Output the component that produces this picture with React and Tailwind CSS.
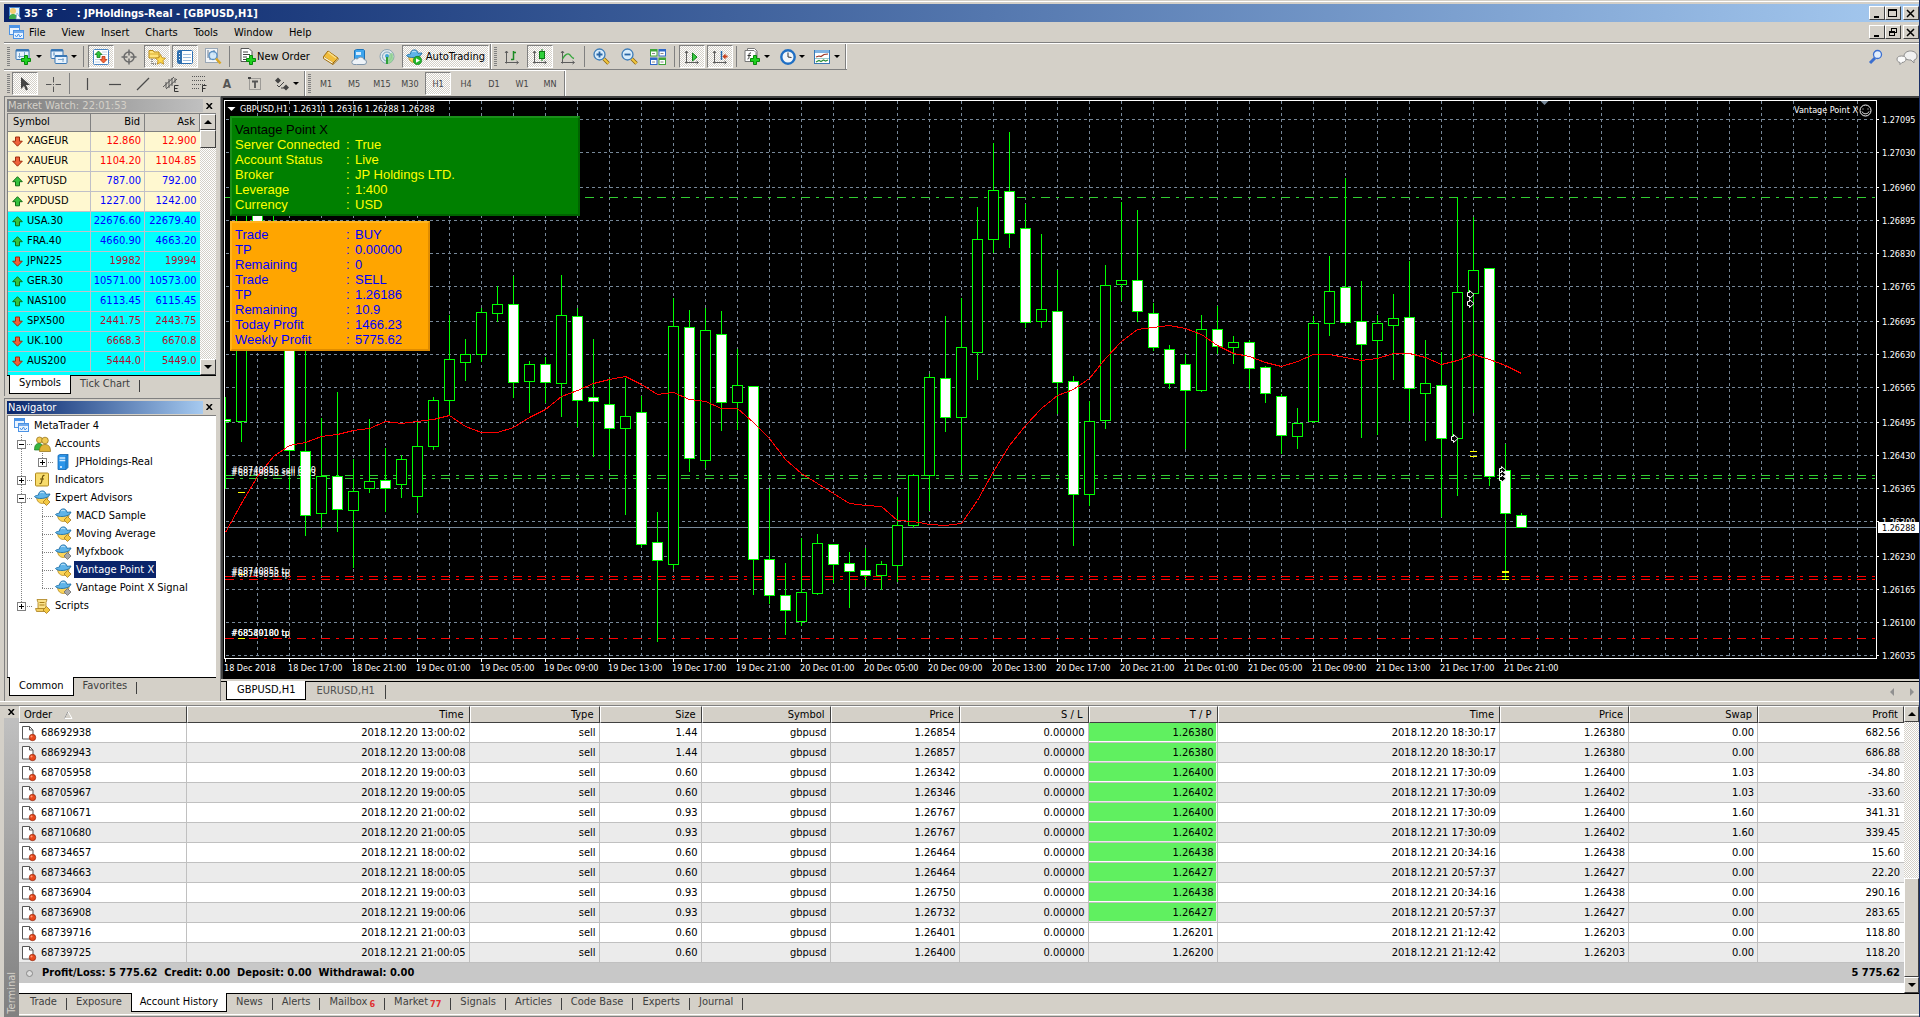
import React from "react";

/* ---------------------------------------------------------------- data */

const quotes = [
  ["XAGEUR", "12.860", "12.900", "down", "metal"],
  ["XAUEUR", "1104.20", "1104.85", "down", "metal"],
  ["XPTUSD", "787.00", "792.00", "up", "metal"],
  ["XPDUSD", "1227.00", "1242.00", "up", "metal"],
  ["USA.30", "22676.60", "22679.40", "up", "index"],
  ["FRA.40", "4660.90", "4663.20", "up", "index"],
  ["JPN225", "19982", "19994", "down", "index"],
  ["GER.30", "10571.00", "10573.00", "up", "index"],
  ["NAS100", "6113.45", "6115.45", "up", "index"],
  ["SPX500", "2441.75", "2443.75", "down", "index"],
  ["UK.100", "6668.3", "6670.8", "down", "index"],
  ["AUS200", "5444.0", "5449.0", "down", "index"],
];

const orders = [
  ["68692938", "2018.12.20 13:00:02", "1.44", "1.26854", "1.26380", "2018.12.20 18:30:17", "1.26380", "0.00", "682.56", true],
  ["68692943", "2018.12.20 13:00:08", "1.44", "1.26857", "1.26380", "2018.12.20 18:30:17", "1.26380", "0.00", "686.88", true],
  ["68705958", "2018.12.20 19:00:03", "0.60", "1.26342", "1.26400", "2018.12.21 17:30:09", "1.26400", "1.03", "-34.80", true],
  ["68705967", "2018.12.20 19:00:05", "0.60", "1.26346", "1.26402", "2018.12.21 17:30:09", "1.26402", "1.03", "-33.60", true],
  ["68710671", "2018.12.20 21:00:02", "0.93", "1.26767", "1.26400", "2018.12.21 17:30:09", "1.26400", "1.60", "341.31", true],
  ["68710680", "2018.12.20 21:00:05", "0.93", "1.26767", "1.26402", "2018.12.21 17:30:09", "1.26402", "1.60", "339.45", true],
  ["68734657", "2018.12.21 18:00:02", "0.60", "1.26464", "1.26438", "2018.12.21 20:34:16", "1.26438", "0.00", "15.60", true],
  ["68734663", "2018.12.21 18:00:05", "0.60", "1.26464", "1.26427", "2018.12.21 20:57:37", "1.26427", "0.00", "22.20", true],
  ["68736904", "2018.12.21 19:00:03", "0.93", "1.26750", "1.26438", "2018.12.21 20:34:16", "1.26438", "0.00", "290.16", true],
  ["68736908", "2018.12.21 19:00:06", "0.93", "1.26732", "1.26427", "2018.12.21 20:57:37", "1.26427", "0.00", "283.65", true],
  ["68739716", "2018.12.21 21:00:03", "0.60", "1.26401", "1.26201", "2018.12.21 21:12:42", "1.26203", "0.00", "118.80", false],
  ["68739725", "2018.12.21 21:00:05", "0.60", "1.26400", "1.26200", "2018.12.21 21:12:42", "1.26203", "0.00", "118.20", false],
];

/* [high, body top, body bottom, low, bearish] in plot units, one per hour */
const candles = [
  [397, 419, 421, 488, 1], [190, 200, 421, 441, 0], [180, 214, 300, 320, 1], [200, 240, 300, 330, 0],
  [290, 300, 450, 489, 1], [300, 451, 515, 535, 1], [418, 476, 513, 527, 0], [392, 476, 509, 531, 1],
  [459, 491, 510, 567, 0], [419, 481, 488, 492, 0], [448, 480, 488, 511, 1], [455, 459, 484, 497, 0],
  [422, 446, 496, 512, 0], [397, 400, 446, 449, 0], [315, 359, 400, 415, 0], [339, 354, 362, 380, 0],
  [308, 312, 354, 361, 0], [286, 304, 313, 321, 0], [276, 304, 382, 397, 1], [361, 364, 381, 412, 0],
  [357, 364, 382, 402, 1], [275, 315, 383, 416, 0], [308, 316, 400, 426, 1], [339, 397, 401, 456, 1],
  [378, 404, 428, 468, 1], [378, 416, 428, 514, 0], [396, 412, 544, 546, 1], [512, 542, 560, 641, 1],
  [298, 326, 564, 568, 0], [310, 327, 458, 471, 1], [308, 330, 460, 467, 0], [311, 334, 402, 430, 1],
  [349, 385, 402, 429, 0], [386, 386, 559, 594, 1], [488, 559, 595, 603, 1], [563, 595, 610, 634, 1],
  [538, 592, 621, 625, 0], [534, 543, 593, 594, 0], [544, 544, 564, 582, 1], [552, 563, 571, 607, 1],
  [548, 570, 575, 586, 1], [561, 564, 575, 589, 0], [497, 525, 565, 581, 0], [474, 475, 525, 527, 0],
  [374, 377, 475, 510, 0], [316, 378, 417, 431, 1], [298, 347, 417, 472, 0], [207, 239, 352, 379, 0],
  [143, 190, 239, 252, 0], [132, 191, 233, 247, 1], [204, 228, 322, 327, 1], [234, 309, 321, 327, 0],
  [270, 311, 382, 413, 1], [376, 381, 494, 545, 1], [401, 421, 494, 505, 0], [265, 285, 420, 428, 0],
  [202, 280, 284, 300, 0], [210, 280, 311, 321, 1], [303, 313, 347, 350, 1], [345, 349, 383, 388, 1],
  [354, 364, 390, 448, 1], [315, 329, 390, 391, 0], [306, 329, 346, 353, 1], [336, 342, 347, 363, 0],
  [340, 342, 368, 388, 1], [366, 367, 393, 402, 1], [394, 396, 435, 453, 1], [408, 423, 436, 448, 0],
  [316, 323, 421, 422, 0], [256, 291, 323, 335, 0], [178, 287, 322, 324, 1], [281, 321, 344, 437, 1],
  [315, 323, 340, 434, 0], [294, 318, 325, 379, 0], [261, 317, 388, 420, 1], [340, 383, 393, 440, 0],
  [352, 385, 438, 516, 1], [197, 292, 438, 495, 0], [217, 270, 293, 412, 0], [268, 268, 476, 485, 1],
  [444, 470, 513, 578, 1], [513, 515, 527, 527, 1],
];

/* moving average, one value per candle */
const average = [
  532, 503, 476, 456, 445, 442, 436, 434, 430, 428, 421, 423, 421, 419, 415, 426, 432, 432, 427, 417, 409, 396, 390, 383,
  379, 376, 384, 394, 392, 399, 401, 408, 408, 422, 438, 459, 473, 483, 493, 503, 505, 506, 520, 521, 524, 525, 523, 500,
  471, 445, 425, 408, 395, 389, 378, 358, 341, 329, 327, 325, 328, 334, 345, 353, 356, 362, 366, 361, 354, 354, 357, 360,
  358, 353, 353, 357, 364, 360, 354, 359, 365, 373,
];

const prices = [
  [119, "1.27095"], [152, "1.27030"], [187, "1.26960"], [220, "1.26895"], [253, "1.26830"], [286, "1.26765"],
  [321, "1.26695"], [354, "1.26630"], [387, "1.26565"], [422, "1.26495"], [455, "1.26430"], [488, "1.26365"],
  [521, "1.26300"], [556, "1.26230"], [589, "1.26165"], [622, "1.26100"], [655, "1.26035"],
];

const levels = [
  [197, "#32cd32"], [475, "#32cd32"], [478, "#32cd32"],
  [576, "#ff0000"], [579, "#ff0000"], [638, "#ff0000"],
];

const times = [
  "18 Dec 2018", "18 Dec 17:00", "18 Dec 21:00", "19 Dec 01:00", "19 Dec 05:00", "19 Dec 09:00", "19 Dec 13:00",
  "19 Dec 17:00", "19 Dec 21:00", "20 Dec 01:00", "20 Dec 05:00", "20 Dec 09:00", "20 Dec 13:00", "20 Dec 17:00",
  "20 Dec 21:00", "21 Dec 01:00", "21 Dec 05:00", "21 Dec 09:00", "21 Dec 13:00", "21 Dec 17:00", "21 Dec 21:00",
];

/* --------------------------------------------------------------- icons */

function Icon({ children, w = 16, h = 16 }) {
  return (
    <svg width={w} height={h} viewBox={`0 0 ${w} ${h}`} className="shrink-0" aria-hidden="true">
      {children}
    </svg>
  );
}

const plus = (
  <path d="M9.5 7.5h3v3h3v3h-3v3h-3v-3h-3v-3h3z" fill="#1fd01f" stroke="#078a0a" />
);

const NewChartIcon = () => (
  <Icon w={18} h={17}>
    <rect x="1" y="1.5" width="13" height="10" rx="1" fill="#e8f3fd" stroke="#3877b5" />
    <path d="M1 2.5h13" stroke="#3877b5" strokeWidth="2" />
    <path d="M4.500 5v5M3 8.500h8M9.500 4v5" stroke="#7aa5cc" />
    {plus}
  </Icon>
);
const ProfilesIcon = () => (
  <Icon w={18} h={17}>
    <rect x="1" y="1.5" width="12" height="9" rx="1" fill="#e8f3fd" stroke="#3877b5" />
    <path d="M1 2.5h12" stroke="#3877b5" strokeWidth="2" />
    <rect x="5" y="7.500" width="12" height="8" rx="1" fill="#e8f3fd" stroke="#3877b5" />
    <path d="M5 8h12" stroke="#3877b5" strokeWidth="2" />
    <path d="M3 6h2M4 4v4M8 11.5h6M13 10v4" stroke="#7aa5cc" />
  </Icon>
);
const MarketIcon = () => (
  <Icon>
    <rect x=".5" y=".5" width="15" height="15" rx="1" fill="#fff" stroke="#4a86c5" />
    <path d="M9 3h5M9 5.500h5M2 10.500h5M2 13h5" stroke="#c3d4e6" />
    <path d="M5.500 2l3.500 3.500H7V8.500H4V5.500H2z" fill="#2ec43a" stroke="#117a1b" strokeWidth=".8" />
    <path d="M10.500 14L7 10.500h2V7.500h3v3h2z" fill="#f4673a" stroke="#b93312" strokeWidth=".8" />
  </Icon>
);
const TargetIcon = () => (
  <Icon>
    <circle cx="8" cy="8" r="5" fill="none" stroke="#6b6b6b" strokeWidth="1.500" />
    <path d="M8 .5v6M8 9.500v6M.5 8h6M9.500 8h6" stroke="#6b6b6b" strokeWidth="1.500" />
  </Icon>
);
const FolderStarIcon = () => (
  <Icon w={18} h={16}>
    <path d="M1 1.500h4l1 1.500h5v6H1z" fill="#ffe37a" stroke="#b98a14" />
    <path d="M1 5h11" stroke="#d8aa2c" />
    <path d="M4 10v5h4" fill="none" stroke="#333" strokeDasharray="1 1" />
    <path d="M12.500 5.500l1.600 3.300 3.400.4-2.500 2.500.6 3.500-3.100-1.700-3.100 1.700.6-3.500L7.500 9.200l3.400-.4z" fill="#ffd94a" stroke="#b9861a" strokeWidth=".8" />
  </Icon>
);
const NotebookIcon = () => (
  <Icon>
    <rect x=".5" y="1.500" width="15" height="13" rx="1" fill="#fff" stroke="#2c6fb2" />
    <rect x="1" y="2" width="4" height="12" fill="#2f6fae" />
    <path d="M2.500 4v1M2.500 7v1M2.500 10v1" stroke="#fff" />
    <path d="M6 5.500h8M6 8.500h8M6 11.500h8" stroke="#9fbddd" />
  </Icon>
);
const TesterIcon = () => (
  <Icon w={18} h={17}>
    <rect x="1.500" y=".5" width="12" height="14" fill="#f3f6f9" stroke="#9aa7b5" />
    <path d="M4 2v8M6 4v8M10 2v5" stroke="#6a7b8c" />
    <circle cx="9" cy="7.500" r="4" fill="#cfe8fa" fillOpacity=".85" stroke="#5a90c4" strokeWidth="1.300" />
    <path d="M12 10.500l4.500 5" stroke="#d8a524" strokeWidth="2.500" />
  </Icon>
);
const NewOrderIcon = () => (
  <Icon w={17} h={17}>
    <path d="M1 .5h8l3 3v10H1z" fill="#fff" stroke="#555" />
    <path d="M3 4h5M3 6.500h7M3 9h4M3 11.500h3" stroke="#444" />
    {plus}
  </Icon>
);
const BookIcon = () => (
  <Icon>
    <path d="M5 2l10 7-5 5L.5 7.500z" fill="#f1bd3c" stroke="#9d6a0b" />
    <path d="M.5 7.500v2l9.500 6v-2M10 15.500l5-5V9" fill="#fff6d3" stroke="#9d6a0b" />
    <path d="M5 3l8 6" stroke="#fbe08b" strokeWidth="1.500" />
  </Icon>
);
const CloudIcon = () => (
  <Icon>
    <path d="M3.500 1.500l2-1h7l1 1v9h-10z" fill="#3ea5ee" stroke="#1c73b8" />
    <path d="M5 3h5v3H5z" fill="#d4ecfd" />
    <path d="M5.500 15.500h7.500a2.500 2.500 0 0 0 0-5 3.500 3.500 0 0 0-6.500-.5A3 3 0 0 0 2.500 11a2.300 2.300 0 0 0 .5 4.500z" fill="#eef3f8" stroke="#8096ab" />
  </Icon>
);
const SignalIcon = () => (
  <Icon>
    <circle cx="8" cy="7.500" r="7" fill="#dfe8ee" stroke="#8da4b3" />
    <circle cx="8" cy="7.500" r="4.500" fill="none" stroke="#7ba2bd" />
    <path d="M8 7.500L9 15a7.500 7.500 0 0 0 5.500-5.500 7 7 0 0 0-1.500-6z" fill="#8ed38a" fillOpacity=".8" />
    <circle cx="8" cy="7" r="2" fill="#45a5d8" />
    <path d="M8 8v7" stroke="#2f9e38" strokeWidth="2" />
  </Icon>
);
const AdvisorIcon = ({ badge }) => (
  <Icon w={17} h={16}>
    <path d="M2.500 6.500c0 5 3 7 6 7s5.500-3 5.500-7z" fill="#fcd55a" stroke="#b4881b" strokeWidth=".8" />
    <path d="M.5 6.500c1 3 14.500 3 15.500-2.500-1.500 0-3 .3-4 .3C11.500 1.500 9.500.5 7.500 1S4.500 3 4.500 5c-1.500.5-3 .5-4 1.500z" fill="#5fb4e8" stroke="#1e6ea6" strokeWidth=".9" />
    <path d="M6 3c1-1 3-1 4 0" fill="none" stroke="#c4e6fb" />
    {badge === "play" && (
      <g>
        <circle cx="11.500" cy="11.500" r="4.200" fill="#22b52b" stroke="#0e7c16" strokeWidth=".6" />
        <path d="M10 9.300l4 2.200-4 2.200z" fill="#fff" />
      </g>
    )}
    {badge === "gold" && <path d="M12.500 8.500l3.500 3.500-3.500 3.500L9 12z" fill="#f3c842" stroke="#a5771a" strokeWidth=".8" />}
    {badge === "gray" && <path d="M12.500 8.500l3.500 3.500-3.500 3.500L9 12z" fill="#a8a8a8" stroke="#6b6b6b" strokeWidth=".8" />}
  </Icon>
);
const axes = <path d="M2.500 2v12.500M1 13.500h13M1 4l1.500-2L4 4M12.500 12l2 1.500-2 1.500" fill="none" stroke="#5c5c5c" />;
const BarsIcon = () => (
  <Icon>
    {axes}
    <path d="M9.500 2v9M9.500 3.500H12M7 10.500h2.500" stroke="#1a8a22" strokeWidth="1.500" fill="none" />
  </Icon>
);
const CandlesIcon = () => (
  <Icon>
    {axes}
    <path d="M10 0v12" stroke="#0d7714" />
    <rect x="7.500" y="2.500" width="5" height="7" fill="#2fd03a" stroke="#0d7714" />
  </Icon>
);
const LineChartIcon = () => (
  <Icon>
    {axes}
    <path d="M2.500 10C5 5 8 4 9.500 5.500S12 9 14 9.500" stroke="#35a53c" strokeWidth="1.300" fill="none" />
  </Icon>
);
const ZoomIcon = ({ out }) => (
  <Icon w={17} h={17}>
    <path d="M10.500 10.500l5 5" stroke="#8a6410" strokeWidth="3.500" />
    <path d="M10.500 10.500l5 5" stroke="#f2c73e" strokeWidth="2" />
    <circle cx="6.500" cy="6.500" r="5.500" fill="#d7ecfb" stroke="#3f7db8" strokeWidth="1.300" />
    <path d={out ? "M3.500 6.500h6" : "M3.500 6.500h6M6.500 3.500v6"} stroke="#2a66a5" strokeWidth="1.800" />
  </Icon>
);
const TileIcon = () => (
  <Icon>
    <rect x="0" y="0" width="7.500" height="7.500" fill="#3fa53a" />
    <rect x="8.500" y="0" width="7.500" height="7.500" fill="#2f68c8" />
    <rect x="0" y="8.500" width="7.500" height="7.500" fill="#2f68c8" />
    <rect x="8.500" y="8.500" width="7.500" height="7.500" fill="#3fa53a" />
    <path d="M1 2.500h5.500v4H1zM9.500 2.500H15v4H9.500zM1 11h5.500v4H1zM9.500 11H15v4H9.500z" fill="#fff" />
    <path d="M2 4.500h3M10.500 4.500h3M2 13h3M10.500 13h3" stroke="#888" />
  </Icon>
);
const ScrollIcon = () => (
  <Icon>
    {axes}
    <path d="M8.500 4l4.500 4-4.500 4z" fill="#37cd40" stroke="#12801a" />
  </Icon>
);
const ShiftIcon = () => (
  <Icon>
    {axes}
    <path d="M9.500 2v9" stroke="#2467a8" strokeWidth="1.500" />
    <path d="M10.500 7.500l3-3v2h2v2h-2v2z" fill="#c8401c" />
  </Icon>
);
const IndicatorsIcon = () => (
  <Icon w={17} h={17}>
    <path d="M3.500.5h7l2.500 2.500v9H3.500z" fill="#fff" stroke="#777" />
    <path d="M1 2.500h9l2 2v9H1z" fill="#fff" stroke="#777" />
    <path d="M7 5C5 4.500 5 6 5 8s0 3-1.500 3M3.500 7.500H7" stroke="#333" fill="none" />
    {plus}
  </Icon>
);
const ClockIcon = () => (
  <Icon>
    <circle cx="8" cy="8" r="6.700" fill="#f1f6fb" stroke="#1f6fc4" strokeWidth="2.400" />
    <path d="M8 3.500V8l3.500.5" fill="none" stroke="#333" />
  </Icon>
);
const TemplateIcon = () => (
  <Icon w={17} h={16}>
    <rect x=".5" y="1.500" width="15" height="13" fill="#fff" stroke="#3877b5" />
    <rect x="1" y="1" width="14" height="3" fill="#7eb2e2" />
    <path d="M2 8l3-1 2 .5L10 5.500l4-.5" fill="none" stroke="#9c3323" strokeWidth="1.200" />
    <path d="M1 9.500h14" stroke="#9cc" />
    <path d="M2 13l3-1.500 2 1 2.500-1.500 2 1 2.500-1" fill="none" stroke="#2d8f3a" strokeWidth="1.200" />
  </Icon>
);
const CursorIcon = () => (
  <Icon>
    <path d="M4 1l9 8H9l2 4.500-2 1L7 10l-3 3z" fill="#444" />
  </Icon>
);
const CrossIcon = () => (
  <Icon>
    <path d="M8.500 1v5.500M8.500 10.500V16M1 8.500h5.500M10.500 8.500H16M8 8.500h1" stroke="#555" />
  </Icon>
);
const LineIcon = ({ d }) => (
  <Icon>
    <path d={d} stroke="#4a4a4a" strokeWidth="1.200" fill="none" />
  </Icon>
);
const ChannelIcon = () => (
  <Icon w={18} h={17}>
    <path d="M1 12L12 2M4 14L15 4M4 7v6M7 4v9M10 3v8M13 3v5" stroke="#555" />
    <path d="M16.500 10.500h-4v6h4M12.500 13.500h3" stroke="#333" fill="none" />
  </Icon>
);
const FiboIcon = () => (
  <Icon w={17} h={17}>
    <path d="M1 1.500h14M1 5.500h14M1 9.500h14M1 13.500h8" stroke="#555" strokeDasharray="1 1" />
    <path d="M15.500 10.500h-4V17M11.500 13.500h3" stroke="#333" fill="none" />
  </Icon>
);
const LabelIcon = () => (
  <Icon>
    <rect x="2.500" y="2.500" width="11" height="11" fill="none" stroke="#666" strokeDasharray="1 1" />
    <rect x="1" y="1" width="3" height="2" fill="#444" />
    <path d="M5 5.500h6M8 5.500v6.500" stroke="#555" strokeWidth="1.800" />
  </Icon>
);
const ArrowsIcon = () => (
  <Icon>
    <path d="M4 1.500l3 3-3 3-3-3zM12 8.500l3 3-3 3-3-3z" fill="#444" />
    <path d="M3 9l2 2 5-5M7 12h3" stroke="#444" fill="none" />
  </Icon>
);
const SearchIcon = () => (
  <Icon>
    <path d="M2 14l5-5" stroke="#3b6fd0" strokeWidth="3" />
    <circle cx="9.500" cy="5.500" r="4" fill="#e3eefc" stroke="#3b6fd0" strokeWidth="1.300" />
  </Icon>
);
const ChatIcon = () => (
  <Icon w={22} h={16}>
    <path d="M8 7c0-3 3-5 6.500-5S21 4 21 7s-2 4-3 4v3l-3-3C11 11 8 10 8 7z" fill="#f0f0f0" stroke="#8d8d8d" />
    <path d="M1 10c0-2 2-3 4.500-3S10 8 10 10s-2 3.500-4 3.500L4 15.500v-2C2 13 1 12 1 10z" fill="#fafafa" stroke="#8d8d8d" />
  </Icon>
);
const AppIcon = () => (
  <Icon w={14} h={14}>
    <rect x="1.500" y="1.500" width="10" height="8" fill="#e9f3fd" stroke="#4a8ad0" />
    <circle cx="5" cy="5" r="3" fill="#f3ce73" />
    <path d="M1 13c0-4 2-5 4-5s4 1 4 5z" fill="#3fae4d" />
    <path d="M8 13l1-6 4 6z" fill="#fff" stroke="#7aa0c8" strokeWidth=".6" />
  </Icon>
);
const ChartsIcon = () => (
  <Icon w={15} h={15}>
    <rect x=".5" y=".5" width="10" height="9" fill="#eaf4ff" stroke="#4b93e6" />
    <path d="M1 2h9" stroke="#4b93e6" strokeWidth="2" />
    <rect x="4.500" y="5.500" width="10" height="8" fill="#eaf4ff" stroke="#4b93e6" />
    <path d="M5 7h9" stroke="#4b93e6" strokeWidth="1.500" />
    <path d="M6 10l1.500 2 2-3 1.500 3 2-2" fill="none" stroke="#4b93e6" />
  </Icon>
);
const PeopleIcon = () => (
  <Icon w={17} h={16}>
    <circle cx="5.500" cy="4" r="3" fill="#f0ca55" stroke="#8f6b12" strokeWidth=".7" />
    <path d="M0.500 14c0-4 1-6.500 4.500-6.500S9 10 9 14z" fill="#38b540" stroke="#1b7a22" strokeWidth=".7" />
    <circle cx="11" cy="4.500" r="3.300" fill="#f0ca55" stroke="#8f6b12" strokeWidth=".7" />
    <path d="M5.500 15.500c0-5 2-7 5.500-7s5.500 2 5.500 7z" fill="#dfb437" stroke="#8f6b12" strokeWidth=".7" />
  </Icon>
);
const ServerIcon = () => (
  <Icon>
    <path d="M3 1.500l2-1h8v13l-2 2H3z" fill="#2b95ea" stroke="#1264ae" strokeWidth=".8" />
    <path d="M4.500 4h6M4.500 6.500h6" stroke="#d2eaff" strokeWidth="1.300" />
    <path d="M11 15.500V2.500l2-2" fill="none" stroke="#0f5ca2" strokeWidth=".7" />
    <rect x="5" y="12" width="2" height="2" fill="#bfe2ff" />
  </Icon>
);
const FunctionIcon = () => (
  <Icon>
    <rect x="1.500" y="1" width="13" height="13" rx="1" fill="#f8dc6c" stroke="#b18a1d" />
    <path d="M10.500 3.500C8 3 8.500 6 8 8s-.5 4-2.500 3.500M6 7h4" stroke="#6d5208" fill="none" strokeWidth="1.200" />
  </Icon>
);
const ScriptIcon = () => (
  <Icon w={17} h={16}>
    <path d="M3 1.500h10l-1 3v6H4v-6z" fill="#fbe28a" stroke="#a97f1a" strokeWidth=".8" />
    <path d="M1.500 10.500h9v3h-8z" fill="#f4cf62" stroke="#a97f1a" strokeWidth=".8" />
    <path d="M5.500 4.500h5M5.500 7h5" stroke="#a97f1a" />
    <path d="M12.500 8.500L16 12l-3.500 3.500L9 12z" fill="#f3c842" stroke="#a5771a" strokeWidth=".8" />
  </Icon>
);
const OrderIcon = () => (
  <Icon w={15} h={17}>
    <path d="M.5 1.500h7l3.500 3.500v9H.5z" fill="#fff" stroke="#555" />
    <path d="M7.500 1.500V5H11" fill="none" stroke="#555" />
    <circle cx="10.500" cy="12.500" r="3.200" fill="#e8481c" stroke="#8f2409" strokeWidth=".7" />
    <circle cx="9.500" cy="11.500" r="1" fill="#ff9b77" />
  </Icon>
);
const TickIcon = ({ up }) => (
  <Icon w={11} h={11}>
    <path
      d={up ? "M5.500.7l4.800 5H7.500V9.800h-4V5.700H.7z" : "M5.500 10.200L.7 5.200h2.800V1h4v4.200h2.800z"}
      fill={up ? "#35c23d" : "#f0613a"}
      stroke={up ? "#0f6b16" : "#9c2a0c"}
    />
  </Icon>
);

/* ------------------------------------------------------------- widgets */

const CHECKER = "bg-[repeating-conic-gradient(#ffffff_0_25%,#d4d0c8_0_50%)] bg-size-[2px_2px]";
const PRESSED = `border border-t-[#808080] border-l-[#808080] border-r-white border-b-white ${CHECKER}`;
const RAISED = "border border-t-white border-l-white border-r-[#404040] border-b-[#404040] bg-[#d4d0c8]";

function Tool({ label, on, wide, children }) {
  return (
    <button
      type="button"
      aria-label={label}
      aria-pressed={!!on}
      className={`mx-px flex h-[23px] shrink-0 items-center justify-center ${wide ? "w-[33px] gap-[3px]" : "w-[26px]"} ${on ? PRESSED : ""}`}
    >
      {children}
      {wide && <span className="border-x-[3px] border-t-[3px] border-x-transparent border-t-black" />}
    </button>
  );
}

const Grip = () => (
  <span className="mr-px ml-[2px] h-5 w-[3px] bg-[repeating-linear-gradient(#808080_0_1px,#d4d0c8_1px_2px)]" />
);
const Sep = () => <span className="mr-[3px] ml-[2px] h-[21px] w-px bg-[#808080]" />;
const End = () => <span className="h-[25px] w-[2px] border-l border-[#808080] border-r border-r-white" />;

function Caption({ label, children }) {
  return (
    <button type="button" aria-label={label} className={`flex h-[14px] w-4 items-center justify-center ${RAISED}`}>
      <svg width="10" height="9" viewBox="0 0 10 9" fill="none" stroke="#000" shapeRendering="crispEdges">
        {children}
      </svg>
    </button>
  );
}

function ScrollButton({ down }) {
  return (
    <button type="button" aria-label={down ? "Scroll down" : "Scroll up"} className={`flex h-4 w-full shrink-0 items-center justify-center ${RAISED}`}>
      <span
        className={
          down
            ? "border-x-4 border-t-4 border-x-transparent border-t-black"
            : "border-x-4 border-b-4 border-x-transparent border-b-black"
        }
      />
    </button>
  );
}

const CloseX = () => (
  <svg width="7" height="6" viewBox="0 0 7 6" aria-hidden="true">
    <path d="M.5 0l5.500 6M6 0L.5 6" stroke="#000" strokeWidth="1.500" />
  </svg>
);

function DockTitle({ title, active }) {
  return (
    <div className="flex h-[13px] items-center">
      <div
        className={`flex h-full flex-1 items-center pl-px leading-none ${
          active
            ? "bg-linear-to-r from-[#0a246a] to-[#a6caf0] text-white"
            : "bg-linear-to-r from-[#808080] to-[#c0c0c0] text-[#d4d0c8]"
        }`}
      >
        {title}
      </div>
      <button type="button" aria-label={`Close ${title}`} className="flex w-[13px] justify-center">
        <CloseX />
      </button>
    </div>
  );
}

function DockTabs({ active, other }) {
  return (
    <div className="flex h-[21px] items-start border-t border-black text-[#404040]">
      <button type="button" className="-mt-px ml-[2px] h-[19px] border border-t-0 border-black bg-white px-[9px] pb-px text-black">
        {active}
      </button>
      <button type="button" className="px-[9px]">{other}</button>
      <span className="mt-1 h-3 w-px bg-[#404040]" />
    </div>
  );
}

/* --------------------------------------------------------- market watch */

function MarketWatch() {
  return (
    <section className="border-t border-l border-[#808080] pt-[2px] pr-1 pl-[2px]">
      <DockTitle title="Market Watch: 22:01:53" />
      <div className="mt-px flex border-t border-l border-[#808080] bg-white">
        <div className="min-w-0 flex-1">
          <table className="w-full table-fixed border-collapse">
            <colgroup>
              <col />
              <col className="w-[54px]" />
              <col className="w-[55px]" />
            </colgroup>
            <thead>
              <tr className="h-[17px]">
                {["Symbol", "Bid", "Ask"].map((h, i) => (
                  <th
                    key={h}
                    className={`border-r border-b border-[#808080] bg-[#d4d0c8] py-0 leading-4 font-normal ${i ? "pr-1 text-right" : "pl-[5px] text-left"}`}
                  >
                    {h}
                  </th>
                ))}
              </tr>
            </thead>
            <tbody>
              {quotes.map(([sym, bid, ask, dir, kind]) => {
                const cell = `border-b border-[#c0c0c8] py-0 pr-[3px] text-right ${
                  dir === "up" ? "text-[#0000ff]" : kind === "metal" ? "text-[#ff0000]" : "text-[#b01030]"
                }`;
                return (
                  <tr key={sym} className={`h-5 ${kind === "metal" ? "bg-[#fff8d0]" : "bg-[#00ffff]"}`}>
                    <td className="border-r border-b border-[#c0c0c8] py-0 pl-1">
                      <span className="flex items-center gap-1">
                        <TickIcon up={dir === "up"} />
                        {sym}
                      </span>
                    </td>
                    <td className={`border-r ${cell}`}>{bid}</td>
                    <td className={cell}>{ask}</td>
                  </tr>
                );
              })}
            </tbody>
          </table>
          <div className="h-[3px] bg-[#00ffff]" />
        </div>
        <div className={`flex w-4 flex-col ${CHECKER}`}>
          <ScrollButton />
          <div className={`h-[18px] ${RAISED}`} />
          <div className="flex-1" />
          <ScrollButton down />
        </div>
      </div>
      <DockTabs active="Symbols" other="Tick Chart" />
    </section>
  );
}

/* ------------------------------------------------------------ navigator */

/* One 21px column of connector lines: v = full, half or no vertical */
function Branch({ v, h, box }) {
  return (
    <svg width="21" height="18" viewBox="0 0 21 18" className="shrink-0" aria-hidden="true" shapeRendering="crispEdges">
      {v && <path d={v === "half" ? "M10.500 0v9" : "M10.500 0v18"} stroke="#808080" strokeDasharray="1 1" />}
      {h && <path d="M10 9.500h11" stroke="#808080" strokeDasharray="1 1" />}
      {box && (
        <g>
          <rect x="6.500" y="5.500" width="8" height="8" fill="#fff" stroke="#808080" />
          <path d={box === "+" ? "M8 9.500h5M10.500 7v5" : "M8 9.500h5"} stroke="#000" />
        </g>
      )}
    </svg>
  );
}

function Node({ branches, icon, label, selected }) {
  return (
    <li className="flex h-[18px] items-center pl-[3px]">
      {branches.map((b, i) => (
        <Branch key={i} {...b} />
      ))}
      <span className={branches.length ? "ml-[2px] flex w-[19px]" : "ml-[3px] flex w-[18px]"}>{icon}</span>
      <span className={`px-[2px] leading-[17px] ${selected ? "bg-[#0a246a] text-white" : ""}`}>{label}</span>
    </li>
  );
}

function Navigator() {
  const full = { v: "full" };
  const twig = { v: "full", h: true };
  return (
    <section className="mt-[2px] flex flex-1 flex-col border-t border-l border-[#808080] pt-[2px] pr-1 pb-[3px] pl-[2px]">
      <DockTitle title="Navigator" active />
      <ul className="mt-px flex-1 border-t border-l border-[#808080] bg-white pt-px">
        <Node branches={[]} icon={<ChartsIcon />} label="MetaTrader 4" />
        <Node branches={[{ v: "full", h: true, box: "-" }]} icon={<PeopleIcon />} label="Accounts" />
        <Node branches={[full, { v: "half", h: true, box: "+" }]} icon={<ServerIcon />} label="JPHoldings-Real" />
        <Node branches={[{ v: "full", h: true, box: "+" }]} icon={<FunctionIcon />} label="Indicators" />
        <Node branches={[{ v: "full", h: true, box: "-" }]} icon={<AdvisorIcon badge="gold" />} label="Expert Advisors" />
        <Node branches={[full, twig]} icon={<AdvisorIcon badge="gold" />} label="MACD Sample" />
        <Node branches={[full, twig]} icon={<AdvisorIcon badge="gold" />} label="Moving Average" />
        <Node branches={[full, twig]} icon={<AdvisorIcon badge="gray" />} label="Myfxbook" />
        <Node branches={[full, twig]} icon={<AdvisorIcon badge="gold" />} label="Vantage Point X" selected />
        <Node branches={[full, { v: "half", h: true }]} icon={<AdvisorIcon badge="gray" />} label="Vantage Point X Signal" />
        <Node branches={[{ v: "half", h: true, box: "+" }]} icon={<ScriptIcon />} label="Scripts" />
      </ul>
      <DockTabs active="Common" other="Favorites" />
    </section>
  );
}

/* ---------------------------------------------------------------- chart */

const ORIGIN_X = 223;
const ORIGIN_Y = 98;
const xOf = (i) => 225 + i * 16;

function TradeArrow({ x, y }) {
  return <path d={`M${x} ${y - 2}h2v-2l4.500 4-4.500 4v-2h-2z`} fill="#000" stroke="#fff" />;
}

function PriceChart() {
  return (
    <svg className="block h-[581px] w-full bg-black text-[9px]" shapeRendering="crispEdges" fill="#fff" role="img" aria-label="GBPUSD hourly candles">
      <defs>
        <pattern id="cols" x="257" y="101" width="32" height="6" patternUnits="userSpaceOnUse">
          <rect width="1" height="3" fill="#778899" />
        </pattern>
      </defs>
      <g transform={`translate(${-ORIGIN_X} ${-ORIGIN_Y})`}>
        <rect x="226" y="101" width="100%" height="557" fill="url(#cols)" />
        {prices.map(([y]) => (
          <line key={y} x1="226" x2="115%" y1={y + 0.5} y2={y + 0.5} stroke="#778899" strokeDasharray="3 3" />
        ))}
        {levels.map(([y, c]) => (
          <line key={y} x1="225" x2="115%" y1={y + 0.5} y2={y + 0.5} stroke={c} strokeDasharray="9 6 3 6" />
        ))}
        <line x1="225" x2="115%" y1="527.500" y2="527.500" stroke="#778899" />
        {candles.map(([hi, top, bottom, lo, bear], i) => (
          <g key={i}>
            <rect x={xOf(i)} y={hi} width="1" height={lo - hi + 1} fill="#00ff00" />
            <rect x={xOf(i) - 4.5} y={top + 0.5} width="10" height={bottom - top} fill={bear ? "#fff" : "#000"} stroke="#00ff00" />
          </g>
        ))}
        <polyline points={average.map((y, i) => `${xOf(i) + 0.5},${y + 0.5}`).join(" ")} fill="none" stroke="#ff0000" />
        <path
          d="M238 492.500h7M238 574.500h7M238 638.500h7M1470 400.500M1470 451.500h7M1470 456.500h7M1502 571.500h7M1502 572.500h7M1502 576.500h7M1502 579.500h7"
          stroke="#ffff00"
        />
        <g shapeRendering="auto">
          <TradeArrow x={1467.5} y={294.5} />
          <TradeArrow x={1467.5} y={303.5} />
          <TradeArrow x={1451.5} y={438.5} />
          <TradeArrow x={1499.5} y={470.5} />
          <TradeArrow x={1499.5} y={474.5} />
          <TradeArrow x={1499.5} y={478.5} />
          <path d="M1539.500 100h10l-5 5z" fill="#778899" />
          <path d="M227.500 107h8l-4 4z" />
        </g>
        <rect x="0" y="0" width="224" height="700" />
        <rect x="0" y="0" width="224" height="700" fill="#000" />
        <path d="M224.500 100v558" stroke="#fff" />
        <line x1="224" x2="115%" y1="100.500" y2="100.500" stroke="#fff" />
        <rect x="224" y="659" width="115%" height="30" fill="#000" />
        <line x1="224" x2="115%" y1="658.500" y2="658.500" stroke="#fff" />
        <g shapeRendering="auto">
          <text x="240" y="112" xmlSpace="preserve">{"GBPUSD,H1  1.26311 1.26316 1.26288 1.26288"}</text>
          <text x="231" y="473">#68740855 sell 0.60</text>
          <text x="231" y="476">#68749858 sell 0.93</text>
          <text x="231" y="574">#68740855 tp</text>
          <text x="231" y="577">#68749858 tp</text>
          <text x="231" y="636">#68540100 tp</text>
          <text x="231" y="636">#68589180 tp</text>
        </g>
        {times.map((t, i) => (
          <g key={t}>
            <rect x={225 + i * 64} y="659" width="1" height="3" />
            <text x={224 + i * 64} y="671">{t}</text>
          </g>
        ))}
      </g>
      {/* price axis, pinned to the right edge */}
      <svg x="100%" y="0" overflow="visible">
        <g transform={`translate(-43 ${-ORIGIN_Y})`}>
          <rect x="0" y="98" width="44" height="582" fill="#000" />
          <rect x="0" y="100" width="1" height="559" fill="#fff" />
          {prices.map(([y, p]) => (
            <g key={p}>
              <rect x="1" y={y} width="2" height="1" />
              <text x="6" y={y + 4}>{p}</text>
            </g>
          ))}
          <rect x="2" y="522" width="42" height="11" fill="#fff" />
          <text x="6" y="531" fill="#000">1.26288</text>
          <text x="-18" y="113" textAnchor="end">Vantage Point X</text>
          <g fill="none" stroke="#fff" shapeRendering="auto">
            <circle cx="-10.500" cy="110.500" r="5.500" />
            <path d="M-13 108.500v1M-8 108.500v1M-14 111.500c1 3 6 3 7 0" />
          </g>
        </g>
      </svg>
    </svg>
  );
}

function InfoRows({ rows }) {
  return rows.map(([k, v], i) => (
    <div key={i} className="flex whitespace-nowrap">
      <dt className="w-[111px]">{k}</dt>
      <dd className="flex">
        <span className="w-[9px]">:</span>
        {v}
      </dd>
    </div>
  ));
}

function ChartPanel() {
  return (
    <section className="flex min-w-0 flex-1 flex-col">
      <div className="relative border-t-2 border-l-2 border-[#404040] bg-black">
        <PriceChart />
        <div className="absolute top-[18px] left-[7px] flex flex-col gap-[5px] font-['Liberation_Sans',sans-serif] text-[13px] leading-[15px]">
          <div className="h-[100px] w-[350px] border-2 border-t-[#1a8f1a] border-r-[#006400] border-b-[#006400] border-l-[#1a8f1a] bg-[#008000] pt-1 pl-[3px] text-[#ffff00]">
            <p className="text-black">Vantage Point X</p>
            <dl>
              <InfoRows
                rows={[
                  ["Server Connected", "True"],
                  ["Account Status", "Live"],
                  ["Broker", "JP Holdings LTD."],
                  ["Leverage", "1:400"],
                  ["Currency", "USD"],
                ]}
              />
            </dl>
          </div>
          <dl className="h-[130px] w-[200px] border-2 border-t-[#ffb41e] border-r-[#e08c00] border-b-[#e08c00] border-l-[#ffb41e] bg-[#ffa500] pt-1 pl-[3px] text-[#0000ff]">
            <InfoRows
              rows={[
                ["Trade", "BUY"],
                ["TP", "0.00000"],
                ["Remaining", "0"],
                ["Trade", "SELL"],
                ["TP", "1.26186"],
                ["Remaining", "10.9"],
                ["Today Profit", "1466.23"],
                ["Weekly Profit", "5775.62"],
              ]}
            />
          </dl>
        </div>
      </div>
      <div className="mt-[2px] flex h-5 items-start border-t border-black pl-[5px] text-[#505050]">
        <button type="button" className="-mt-px h-[19px] border border-t-0 border-black bg-white px-[10px] text-black">GBPUSD,H1</button>
        <button type="button" className="px-[10px] pt-px">EURUSD,H1</button>
        <span className="mt-[3px] h-[14px] w-px bg-[#404040]" />
        <span className="mt-[6px] mr-[5px] ml-auto flex gap-4">
          <i className="border-y-4 border-r-4 border-y-transparent border-r-[#909090]" />
          <i className="border-y-4 border-l-4 border-y-transparent border-l-[#909090]" />
        </span>
      </div>
    </section>
  );
}

/* ------------------------------------------------------------- terminal */

const heads = ["Order", "Time", "Type", "Size", "Symbol", "Price", "S / L", "T / P", "Time", "Price", "Swap", "Profit"];
const tabs = ["Trade", "Exposure", "Account History", "News", "Alerts", "Mailbox", "Market", "Signals", "Articles", "Code Base", "Experts", "Journal"];
const counts = { Mailbox: 6, Market: 77 };

function Terminal() {
  return (
    <section className="flex flex-1 border-t border-[#808080] pl-1">
      <div className="flex w-[15px] flex-col">
        <button type="button" aria-label="Close Terminal" className="flex h-3 items-center justify-center">
          <CloseX />
        </button>
        <div className="flex flex-1 items-end justify-center bg-linear-to-b from-[#c0c0c0] to-[#808080] pb-[3px] text-[#d4d0c8]">
          <span className="rotate-180 leading-3 [writing-mode:vertical-rl]">Terminal</span>
        </div>
      </div>
      <div className="flex min-w-0 flex-1 flex-col">
        <div className="flex bg-white">
          <div className="min-w-0 flex-1">
            <table className="w-full table-fixed border-separate border-spacing-0">
              <colgroup>
                <col className="w-[168px]" />
                <col />
                <col className="w-[130px]" />
                <col className="w-[102px]" />
                <col className="w-[129px]" />
                <col className="w-[129px]" />
                <col className="w-[129px]" />
                <col className="w-[129px]" />
                <col />
                <col className="w-[129px]" />
                <col className="w-[129px]" />
                <col className="w-[146px]" />
              </colgroup>
              <thead>
                <tr className="h-[17px]">
                  {heads.map((h, i) => (
                    <th key={i} className={`py-0 leading-[15px] font-normal ${RAISED} ${i ? "pr-[5px] text-right" : "pl-1 text-left"}`}>
                      {h}
                      {i === 0 && (
                        <svg width="9" height="8" viewBox="0 0 9 8" className="ml-3 inline" aria-hidden="true">
                          <path d="M4 .5L.5 7.500h7.500z" fill="none" stroke="#fff" />
                          <path d="M4 .5L.5 7.500" stroke="#999" />
                        </svg>
                      )}
                    </th>
                  ))}
                </tr>
              </thead>
              <tbody>
                {orders.map(([id, open, size, price, tp, close, exit, swap, profit, hit], r) => {
                  const c = "border-r border-b border-[#c0c0c0] pt-px pr-[3px] pb-0 text-right";
                  return (
                    <tr key={id} className={`h-5 ${r % 2 ? "bg-[#ebebeb]" : "bg-white"}`}>
                      <td className="border-r border-b border-[#c0c0c0] pt-px pb-0 pl-[3px]">
                        <span className="flex items-center gap-1">
                          <OrderIcon />
                          {id}
                        </span>
                      </td>
                      <td className={c}>{open}</td>
                      <td className={c}>sell</td>
                      <td className={c}>{size}</td>
                      <td className={c}>gbpusd</td>
                      <td className={c}>{price}</td>
                      <td className={c}>0.00000</td>
                      <td className="border-r border-b border-[#c0c0c0] p-0 text-right">
                        <div className={`mr-px mb-px h-[18px] pr-[2px] leading-[20px] ${hit ? "bg-[#60f060]" : ""}`}>{tp}</div>
                      </td>
                      <td className={c}>{close}</td>
                      <td className={c}>{exit}</td>
                      <td className={c}>{swap}</td>
                      <td className="border-b border-[#c0c0c0] pt-px pr-1 pb-0 text-right">{profit}</td>
                    </tr>
                  );
                })}
              </tbody>
              <tfoot>
                <tr className="h-5 bg-[#c8c8c8] font-bold">
                  <td colSpan={11} className="py-0 pl-[6px]">
                    <span className="flex items-center gap-2">
                      <Icon w={9} h={9}>
                        <circle cx="4.500" cy="4.500" r="3" fill="#ddd" stroke="#888" />
                      </Icon>
                      <span className="whitespace-pre">{"Profit/Loss: 5 775.62  Credit: 0.00  Deposit: 0.00  Withdrawal: 0.00"}</span>
                    </span>
                  </td>
                  <td className="py-0 pr-1 text-right">5 775.62</td>
                </tr>
              </tfoot>
            </table>
            <div className="h-[10px]" />
          </div>
          <div className={`flex w-[15px] flex-col ${CHECKER}`}>
            <ScrollButton />
            <div className="flex-1" />
            <div className={`h-[99px] ${RAISED}`} />
            <ScrollButton down />
          </div>
        </div>
        <div className="flex h-5 items-start border-t border-black pl-[2px] text-[#404040]">
          {tabs.map((t) =>
            t === "Account History" ? (
              <button key={t} type="button" className="-mt-px h-[19px] border border-t-0 border-black bg-white px-2 text-black">
                {t}
              </button>
            ) : (
              <span key={t} className="flex">
                <button type="button" className="px-[9px]">
                  {t}
                  {counts[t] && <sub className="pl-[2px] text-[9px] leading-none font-bold text-[#e03030]">{counts[t]}</sub>}
                </button>
                {t !== "Exposure" && <span className="mt-1 h-3 w-px bg-[#404040]" />}
              </span>
            )
          )}
        </div>
        <div className="mt-auto h-[3px] border-t border-b border-t-white border-b-[#808080]" />
      </div>
    </section>
  );
}

/* ------------------------------------------------------------------ app */

function TitleBar() {
  return (
    <header className="ml-1">
      <div className="flex h-[18px] items-center bg-linear-to-r from-[#0a246a] to-[#a6caf0] pl-1 text-white">
        <AppIcon />
        <h1 className="ml-[2px] leading-none font-bold whitespace-pre">{"35ˉ 8ˉ ˉ   : JPHoldings-Real - [GBPUSD,H1]"}</h1>
        <span className="ml-auto flex">
          <Caption label="Minimize"><path d="M2 7.500h5" strokeWidth="2" /></Caption>
          <Caption label="Maximize"><path d="M.5 .5h8v7h-8zM.5 1.500h8" /></Caption>
          <span className="w-[2px]" />
          <Caption label="Close"><path d="M1 1l7 7M8 1L1 8" strokeWidth="1.500" shapeRendering="auto" /></Caption>
        </span>
      </div>
      <nav className="flex h-[21px] items-center border-b border-[#808080] pl-[5px]">
        <ChartsIcon />
        <span className="ml-[5px] flex gap-4 leading-none">
          {["File", "View", "Insert", "Charts", "Tools", "Window", "Help"].map((m) => (
            <button key={m} type="button">{m}</button>
          ))}
        </span>
        <span className="ml-auto flex">
          <Caption label="Minimize chart"><path d="M2 7.500h5" strokeWidth="2" /></Caption>
          <Caption label="Restore chart"><path d="M3.500 3V.5h5v4H7M1.500 3.500h5v4h-5zM1.500 4.500h5" /></Caption>
          <span className="w-[2px]" />
          <Caption label="Close chart"><path d="M1 1l7 7M8 1L1 8" strokeWidth="1.500" shapeRendering="auto" /></Caption>
        </span>
      </nav>
    </header>
  );
}

function Toolbars() {
  return (
    <div className="ml-1">
      <div className="flex h-[27px] items-center border-t border-white">
        <div className="flex h-full items-center border-b border-[#808080] pl-px">
          <Grip />
          <Tool label="New chart" wide><NewChartIcon /></Tool>
          <Tool label="Profiles" wide><ProfilesIcon /></Tool>
          <Sep />
          <Tool label="Market Watch" on><MarketIcon /></Tool>
          <Tool label="Data Window"><TargetIcon /></Tool>
          <Tool label="Navigator" on><FolderStarIcon /></Tool>
          <Tool label="Terminal" on><NotebookIcon /></Tool>
          <Tool label="Strategy Tester"><TesterIcon /></Tool>
          <Sep />
          <button type="button" className="flex h-[23px] items-center px-[7px]">
            <NewOrderIcon />
            New Order
          </button>
          <Tool label="MetaEditor"><BookIcon /></Tool>
          <Tool label="Virtual hosting"><CloudIcon /></Tool>
          <Tool label="Signals"><SignalIcon /></Tool>
          <button type="button" aria-pressed="true" className={`mr-px ml-px flex h-[23px] items-center gap-[3px] px-[3px] ${PRESSED}`}>
            <AdvisorIcon badge="play" />
            AutoTrading
          </button>
          <End />
          <Grip />
          <Tool label="Bar chart"><BarsIcon /></Tool>
          <Tool label="Candlesticks" on><CandlesIcon /></Tool>
          <Tool label="Line chart"><LineChartIcon /></Tool>
          <Sep />
          <Tool label="Zoom in"><ZoomIcon /></Tool>
          <Tool label="Zoom out"><ZoomIcon out /></Tool>
          <Tool label="Tile windows"><TileIcon /></Tool>
          <Sep />
          <Tool label="Auto scroll" on><ScrollIcon /></Tool>
          <Tool label="Chart shift" on><ShiftIcon /></Tool>
          <Sep />
          <Tool label="Indicators" wide><IndicatorsIcon /></Tool>
          <Tool label="Periods" wide><ClockIcon /></Tool>
          <Tool label="Templates" wide><TemplateIcon /></Tool>
          <End />
        </div>
        <div className="mr-px ml-auto flex gap-3">
          <button type="button" aria-label="Search"><SearchIcon /></button>
          <button type="button" aria-label="Chat"><ChatIcon /></button>
        </div>
      </div>
      <div className="flex h-[26px]">
        <div className="flex items-center border-t border-white pl-px">
          <Grip />
          <Tool label="Cursor" on><CursorIcon /></Tool>
          <Tool label="Crosshair"><CrossIcon /></Tool>
          <Sep />
          <Tool label="Vertical line"><LineIcon d="M8.500 2v12" /></Tool>
          <Tool label="Horizontal line"><LineIcon d="M2 8.500h12" /></Tool>
          <Tool label="Trendline"><LineIcon d="M2 14L14 2" /></Tool>
          <Tool label="Equidistant channel"><ChannelIcon /></Tool>
          <Tool label="Fibonacci"><FiboIcon /></Tool>
          <Tool label="Text"><span className="text-[12px] font-bold text-[#555]">A</span></Tool>
          <Tool label="Text label"><LabelIcon /></Tool>
          <Tool label="Arrows" wide><ArrowsIcon /></Tool>
          <End />
          <Grip />
          {["M1", "M5", "M15", "M30", "H1", "H4", "D1", "W1", "MN"].map((p) => (
            <Tool key={p} label={p} on={p === "H1"}>
              <span className="text-[9px] text-[#444]">{p}</span>
            </Tool>
          ))}
          <End />
        </div>
      </div>
    </div>
  );
}

export default function App() {
  return (
    <div className="flex min-h-screen w-full flex-col overflow-hidden border-r border-[#1a2f66] bg-[#d4d0c8] pt-px font-['DejaVu_Sans_Condensed','DejaVu_Sans',sans-serif] text-[11px] leading-[16px] text-black">
      <div className="h-[3px] border-t border-white" />
      <TitleBar />
      <Toolbars />
      <main className="flex">
        <aside className="ml-1 flex w-[217px] shrink-0 flex-col border-r border-[#808080]">
          <MarketWatch />
          <Navigator />
        </aside>
        <ChartPanel />
      </main>
      <div className="h-1 border-t border-white" />
      <Terminal />
    </div>
  );
}
